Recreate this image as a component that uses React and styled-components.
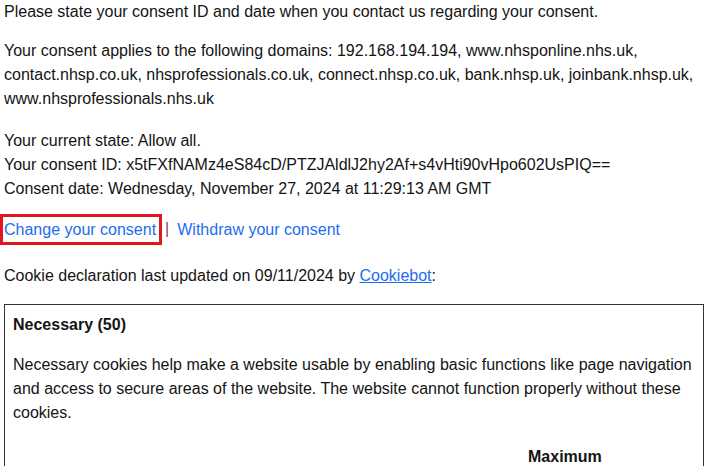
import React from "react";
import styled, { createGlobalStyle } from "styled-components";

const Global = createGlobalStyle`
  html, body { margin: 0; padding: 0; background: #ffffff; }
  body {
    font-family: "Liberation Sans", Arial, Helvetica, sans-serif;
    font-size: 16px;
    line-height: 24px;
    color: #141414;
    overflow: hidden;
  }
`;

const Page = styled.div`
  padding: 0 4px;
  width: 700px;
`;

const Para = styled.p`
  margin: ${(p) => p.$top || 0}px 0 0 0;
`;

const LinkRow = styled.div`
  margin-top: 16px;
  display: flex;
  align-items: center;
  height: 24px;
`;

const ActionLink = styled.a`
  color: #1a6ef0;
  text-decoration: none;
  display: inline-block;
  line-height: 25px;
  padding: ${(p) => (p.$outlined ? "0 3px 0 1px" : "0")};
  margin-left: ${(p) => (p.$outlined ? "-1px" : "0")};
  outline: ${(p) => (p.$outlined ? "3px solid #e3151f" : "none")};
`;

const Sep = styled.span`
  color: #8a3a5a;
  margin: 0 8px 0 6px;
`;

const UnderLink = styled.a`
  color: #1a6ef0;
  text-decoration: underline;
`;

const Box = styled.div`
  margin-top: 16px;
  border: 1px solid #333333;
  padding: 8px 8px 0 8px;
  height: 200px;
`;

const BoxTitle = styled.div`
  font-weight: bold;
`;

const BoxText = styled.p`
  margin: 16px 0 0 0;
`;

const Table = styled.table`
  margin-top: 20px;
  width: 100%;
  border-collapse: collapse;
  table-layout: fixed;
`;

const Th = styled.th`
  text-align: left;
  vertical-align: top;
  padding: 0 5px 0 0;
  font-weight: bold;
  width: ${(p) => (p.$w ? `${p.$w}px` : "auto")};
`;

export default function App() {
  return (
    <>
      <Global />
      <Page>
        <Para>Please state your consent ID and date when you contact us regarding your consent.</Para>
        <Para $top={15}>
          Your consent applies to the following domains: 192.168.194.194, www.nhsponline.nhs.uk,
          contact.nhsp.co.uk, nhsprofessionals.co.uk, connect.nhsp.co.uk, bank.nhsp.uk, joinbank.nhsp.uk,
          www.nhsprofessionals.nhs.uk
        </Para>
        <Para $top={18}>
          Your current state: Allow all.
          <br />
          Your consent ID: x5tFXfNAMz4eS84cD/PTZJAldlJ2hy2Af+s4vHti90vHpo602UsPIQ==
          <br />
          Consent date: Wednesday, November 27, 2024 at 11:29:13 AM GMT
        </Para>
        <LinkRow>
          <ActionLink href="#" $outlined>Change your consent</ActionLink>
          <Sep>|</Sep>
          <ActionLink href="#">Withdraw your consent</ActionLink>
        </LinkRow>
        <Para $top={23}>
          Cookie declaration last updated on 09/11/2024 by <UnderLink href="#">Cookiebot</UnderLink>:
        </Para>
        <Box>
          <BoxTitle>Necessary (50)</BoxTitle>
          <BoxText>
            Necessary cookies help make a website usable by enabling basic functions like page navigation
            and access to secure areas of the website. The website cannot function properly without these
            cookies.
          </BoxText>
          <Table>
            <thead>
              <tr>
                <Th $w={510}>&nbsp;</Th>
                <Th $w={95}>Maximum Storage Duration</Th>
                <Th>&nbsp;</Th>
              </tr>
            </thead>
          </Table>
        </Box>
      </Page>
    </>
  );
}
